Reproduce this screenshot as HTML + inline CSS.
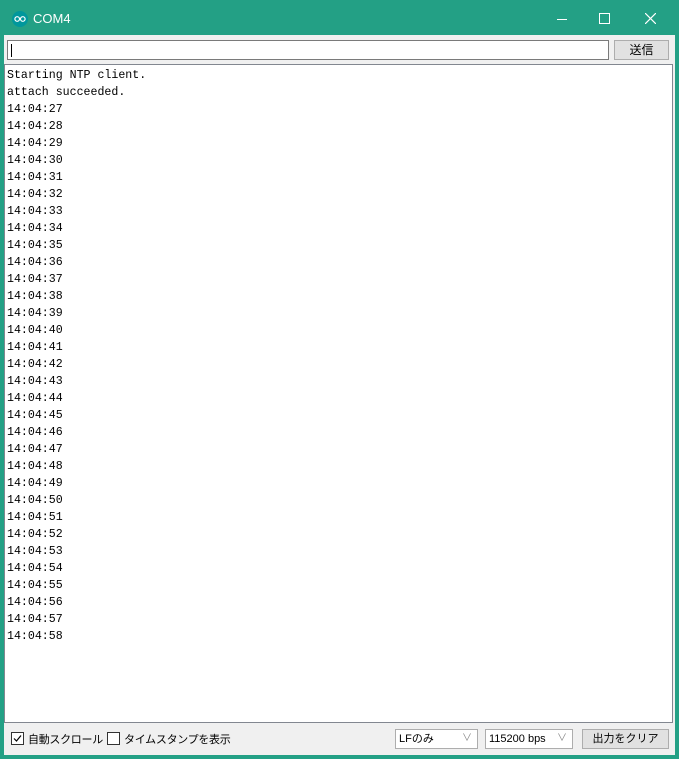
<!DOCTYPE html><html><head><style>
body{margin:0;width:679px;height:759px;background:#23a085;position:relative;overflow:hidden;font-family:"Liberation Sans","Noto Sans CJK JP",sans-serif}
.a{position:absolute}
#win{left:4px;top:35px;width:671px;height:720px;background:#f0f0f0}
#inp{left:7px;top:40px;width:600px;height:18px;background:#fff;border:1px solid #7a7a7a}
#send{left:614px;top:40px;width:53px;height:18px;background:#e1e1e1;border:1px solid #adadad;font-size:12px;text-align:center;line-height:18px}
#out{left:4px;top:64px;width:669px;height:659px;background:#fff;border:1px solid #828790;font-family:"Liberation Mono",monospace;font-size:11.6px;line-height:17px;padding:2px 0 0 2px;box-sizing:border-box;white-space:pre;color:#000}
.sel{background:#fff;border:1px solid #adadad;height:18px;font-size:11px;line-height:18px;padding-left:3px;box-sizing:content-box}
.cb{width:11px;height:11px;border:1px solid #333;background:#fff}
.t{font-size:11px;letter-spacing:-0.3px}
</style></head><body>
<svg class="a" style="left:12px;top:11px" width="16" height="16"><circle cx="8" cy="8" r="8" fill="#00979c"/><circle cx="5.2" cy="8" r="2.3" fill="none" stroke="#fff" stroke-width="1.2"/><circle cx="10.8" cy="8" r="2.3" fill="none" stroke="#fff" stroke-width="1.2"/></svg>
<div class="a" style="left:33px;top:11px;color:#fff;font-size:13px">COM4</div>
<div class="a" style="left:557px;top:19px;width:10px;height:1px;background:#fff"></div>
<div class="a" style="left:599px;top:13px;width:9px;height:9px;border:1px solid #fff"></div>
<svg class="a" style="left:645px;top:13px" width="11" height="11"><path d="M0 0L11 11M11 0L0 11" stroke="#fff" stroke-width="1.2"/></svg>
<div class="a" id="win"></div>
<div class="a" id="inp"><div class="a" style="left:3px;top:3px;width:1px;height:13px;background:#000"></div></div>
<div class="a" id="send">送信</div>
<div class="a" id="out">Starting NTP client.
attach succeeded.
14:04:27
14:04:28
14:04:29
14:04:30
14:04:31
14:04:32
14:04:33
14:04:34
14:04:35
14:04:36
14:04:37
14:04:38
14:04:39
14:04:40
14:04:41
14:04:42
14:04:43
14:04:44
14:04:45
14:04:46
14:04:47
14:04:48
14:04:49
14:04:50
14:04:51
14:04:52
14:04:53
14:04:54
14:04:55
14:04:56
14:04:57
14:04:58</div>
<div class="a cb" style="left:11px;top:732px"><svg width="11" height="11" style="display:block"><path d="M2 5.5L4.5 8L9 2.5" stroke="#000" fill="none" stroke-width="1.2"/></svg></div>
<div class="a t" style="left:28px;top:731px">自動スクロール</div>
<div class="a cb" style="left:107px;top:732px"></div>
<div class="a t" style="left:124px;top:731px">タイムスタンプを表示</div>
<div class="a sel" style="left:395px;top:729px;width:78px">LFのみ<span class="a" style="right:5px;top:0;color:#888;font-size:10px">∨</span></div>
<div class="a sel" style="left:485px;top:729px;width:83px">115200 bps<span class="a" style="right:5px;top:0;color:#888;font-size:10px">∨</span></div>
<div class="a" style="left:582px;top:729px;width:85px;height:18px;background:#e1e1e1;border:1px solid #adadad;font-size:11px;text-align:center;line-height:18px">出力をクリア</div>
</body></html>
